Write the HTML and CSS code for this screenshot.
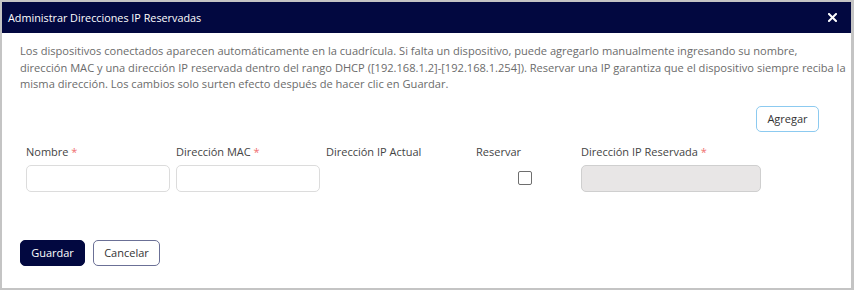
FILE: index.html
```html
<!DOCTYPE html>
<html lang="es">
<head>
    <meta charset="UTF-8">
    <meta name="viewport" content="width=device-width, initial-scale=1.0">
    <title>Administrar Direcciones IP Reservadas</title>
    <link rel="stylesheet" href="styles.css">
</head>
<body>

<div class="dialog">
    <div class="dialog-header">
        <span class="dialog-title">Administrar Direcciones IP Reservadas</span>
        <button class="close-btn" aria-label="Cerrar">
            <svg width="9" height="9" viewBox="0 0 9 9">
                <path d="M1 1 L8 8 M8 1 L1 8" stroke="#fff" stroke-width="2" stroke-linecap="square"/>
            </svg>
        </button>
    </div>

    <div class="dialog-body">
        <p class="description">
            Los dispositivos conectados aparecen automáticamente en la cuadrícula. Si falta un dispositivo, puede agregarlo manualmente ingresando su nombre,<br>
            dirección MAC y una dirección IP reservada dentro del rango DHCP ([192.168.1.2]-[192.168.1.254]). Reservar una IP garantiza que el dispositivo siempre reciba la<br>
            misma dirección. Los cambios solo surten efecto después de hacer clic en Guardar.
        </p>

        <div class="toolbar">
            <button class="btn btn-add">Agregar</button>
        </div>

        <div class="grid">
            <div class="cell">
                <label class="label">Nombre <span class="req">*</span></label>
                <input class="input" type="text">
            </div>
            <div class="cell">
                <label class="label">Dirección MAC <span class="req">*</span></label>
                <input class="input" type="text">
            </div>
            <div class="cell">
                <label class="label">Dirección IP Actual</label>
            </div>
            <div class="cell cell-reserve">
                <label class="label">Reservar</label>
                <span class="check-wrap"><input class="check" type="checkbox"></span>
            </div>
            <div class="cell cell-ip">
                <label class="label">Dirección IP Reservada <span class="req">*</span></label>
                <input class="input input-disabled" type="text" disabled>
            </div>
        </div>

        <div class="footer">
            <button class="btn btn-primary">Guardar</button>
            <button class="btn btn-secondary">Cancelar</button>
        </div>
    </div>
</div>

</body>
</html>
```

FILE: styles.css
```css
body {
    margin: 0;
    background-color: #c4c4c4;
    font-family: "Open Sans", Arial, sans-serif;
    height: 290px;
    overflow: hidden;
}
.dialog {
    margin: 2px 3px 0 2px;
    height: 286px;
    background-color: #fff;
    display: flex;
    flex-direction: column;
}
.dialog-header {
    height: 31px;
    background-color: #020840;
    display: flex;
    align-items: center;
    justify-content: space-between;
    padding: 0 14px 0 6px;
}
.dialog-title {
    color: #fff;
    font-size: 10.8px;
}
.close-btn {
    background: none;
    border: none;
    padding: 0;
    display: flex;
    cursor: pointer;
}
.dialog-body {
    padding: 10px 18px 0 18px;
}
.description {
    margin: 0;
    color: #6b6b6b;
    font-size: 11.1px;
    line-height: 16.5px;
    white-space: nowrap;
}
.toolbar {
    display: flex;
    justify-content: flex-end;
    margin-top: 13px;
    padding-right: 14px;
}
.btn {
    font-family: "Open Sans", Arial, sans-serif;
    font-size: 11px;
    height: 26px;
    padding: 0 11px;
    border-radius: 5px;
    background-color: #fff;
    cursor: pointer;
}
.btn-add {
    border: 1px solid #8ccaf0;
    color: #333;
    width: 63px;
    padding: 0;
}
.grid {
    display: flex;
    margin-top: 11px;
    padding-left: 6px;
}
.cell {
    width: 150px;
    display: flex;
    flex-direction: column;
    gap: 5px;
}
.cell-reserve {
    width: 105px;
}
.cell-ip {
    width: 180px;
}
.label {
    font-size: 11px;
    color: #444;
    line-height: 17px;
}
.req {
    color: #f07070;
}
.input {
    width: 144px;
    height: 27px;
    box-sizing: border-box;
    border: 1px solid #dcdcdc;
    border-radius: 5px;
    background-color: #fff;
}
.input-disabled {
    width: 180px;
    background-color: #e8e6e6;
    border-color: #cfcfcf;
}
.check-wrap {
    display: flex;
    height: 27px;
    align-items: center;
    padding-left: 42px;
}
.check {
    margin: 0;
    width: 14px;
    height: 14px;
    appearance: none;
    border: 1px solid #6e6e6e;
    border-radius: 2px;
    background-color: #fff;
}
.footer {
    display: flex;
    gap: 8px;
    margin-top: 48px;
}
.btn-primary {
    background-color: #020840;
    color: #fff;
    border: 1px solid #020840;
    width: 65px;
    padding: 0;
}
.btn-secondary {
    border: 1px solid #6b7096;
    color: #333;
    width: 67px;
    padding: 0;
}
```
